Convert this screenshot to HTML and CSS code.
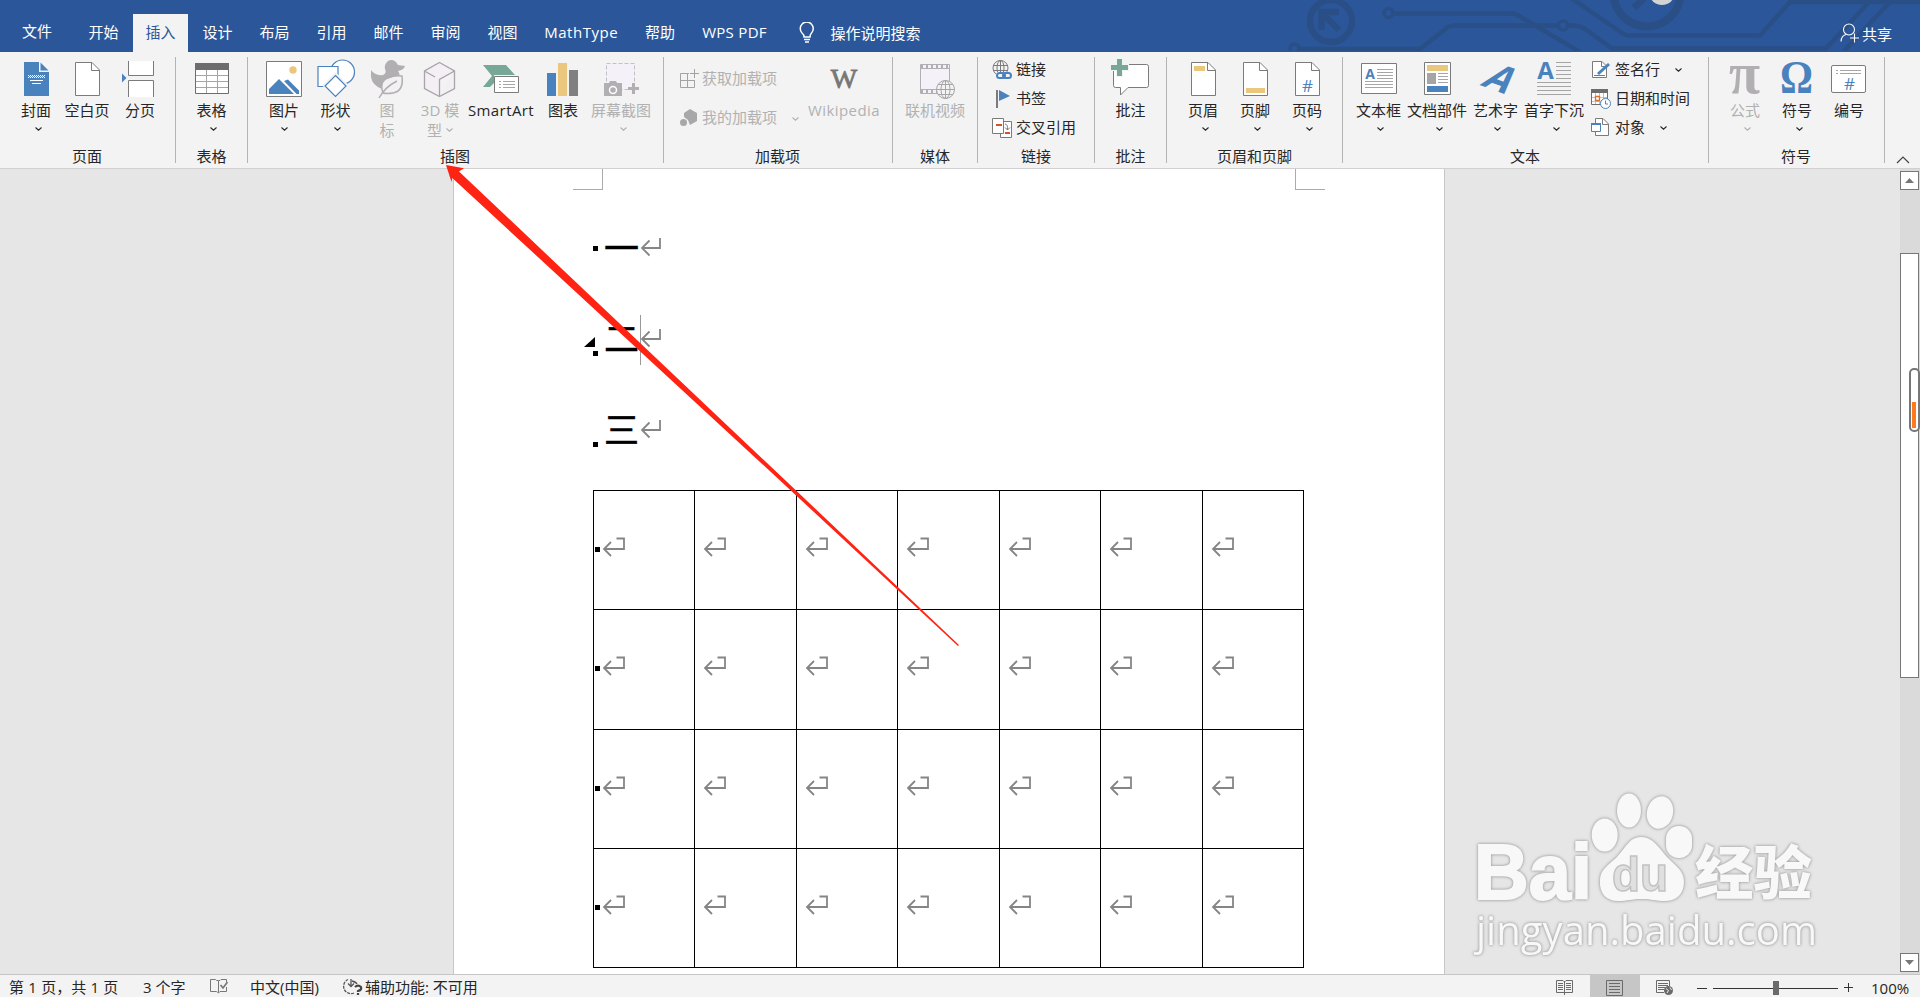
FILE: index.html
```html
<!DOCTYPE html>
<html lang="zh-CN">
<head>
    <meta charset="UTF-8">
    <meta name="viewport" content="width=device-width, initial-scale=1.0">
    <title>Word</title>
    <link rel="stylesheet" href="styles.css">
</head>
<body>
    <svg class="defs" width="0" height="0">
        <symbol id="chev" viewBox="0 0 7 4"><path d="M.5.5 3.5 3.2 6.5.5" fill="none" stroke="currentColor" stroke-width="1.1"/></symbol>
        <symbol id="page" viewBox="0 0 40 40">
            <path d="M8.500 3.500H25L32.500 11V36.500H8.500Z" fill="#fff" stroke="#7b7b7b"/>
            <path d="M24.500 3.500V11.500H32.500" fill="none" stroke="#7b7b7b"/>
        </symbol>
        <symbol id="ret" viewBox="0 0 22 20"><path d="M20 1V11H2M9.500 3.500 2 11 9.500 18.500" fill="none" stroke="#858585" stroke-width="1.800"/></symbol>
        <symbol id="cellret" viewBox="0 0 24 20"><path d="M14.500 1.500H22V12H2M9 5 2 12 9 19" fill="none" stroke="#858585" stroke-width="1.800"/></symbol>
    </svg>

    <header>
        <svg class="circuit" width="660" height="51" viewBox="1260 0 660 51">
            <g fill="none" stroke="#2a4f86" stroke-width="4.500">
                <circle cx="1331" cy="21" r="21" stroke-width="6.500"/>
                <path d="M1339 12H1321.500V30M1321 12 1339 30" stroke-width="6.500"/>
                <circle cx="1388.500" cy="13" r="4.500" stroke-width="3.500"/>
                <path d="M1393 13.500H1511Q1516 13.500 1521 17L1580 52"/>
                <circle cx="1294.500" cy="48.500" r="4.500" stroke-width="3.500"/>
                <path d="M1299 49H1420L1448 27Q1451 25.500 1455 25.500H1558M1567 25.500H1573Q1581 25.500 1588 31L1612 48.500H1826L1869 2"/>
                <circle cx="1563" cy="25.500" r="4.500" stroke-width="3.500"/>
                <path d="M1571-2 1622 33Q1625 35.500 1629 35.500H1760L1790 2H1920M1844 51 1890 2"/>
                <circle cx="1647" cy="-7" r="33.500" stroke-width="8"/>
                <path d="M1634 8 1646-4" stroke-width="7"/>
            </g>
            <circle cx="1662" cy="-8" r="13" fill="#d3d3d3"/>
        </svg>
        <nav>
            <a class="file">文件</a>
            <a>开始</a>
            <a class="active">插入</a>
            <a>设计</a>
            <a>布局</a>
            <a>引用</a>
            <a>邮件</a>
            <a>审阅</a>
            <a>视图</a>
            <a class="mathtype">MathType</a>
            <a>帮助</a>
            <a class="wps">WPS PDF</a>
            <a class="tell">
                <svg width="16" height="22" viewBox="0 0 16 22"><path d="M5 15Q5 12.500 3 11A6.500 6.500 0 1 1 12.500 11Q11 12.500 11 15ZM5 17.500H11M6 20H10" fill="none" stroke="#fff" stroke-width="1.500"/></svg>
                操作说明搜索
            </a>
        </nav>
        <div class="share">
            <svg width="20" height="20" viewBox="0 0 20 20"><g fill="none" stroke="#fff" stroke-width="1.100"><circle cx="9" cy="6.500" r="5.500"/><path d="M1 18.500Q1.500 12.500 6 11.500M14.500 10.500V19.500M10 15H19"/></g></svg>
            共享
        </div>
    </header>

    <section class="ribbon">
        <div class="group g-pages">
            <div class="tools">
                <div class="tool w50">
                    <svg width="40" height="40" viewBox="0 0 40 40"><path d="M8 3H23V13H33V37H8Z" fill="#4a82bd"/><path d="M24.500 3.500V11.500H32.500Z" fill="#4a82bd"/><path d="M12 16.500H29M12 18.500H29" stroke="#fff" stroke-dasharray="1 1"/><path d="M13 17.500H29" stroke="#fff" stroke-dasharray="1 1"/><path d="M14 21.500H27M16 24.500H25" stroke="#fff"/></svg>
                    <span>封面</span><svg class="chev off" width="7" height="4"><use href="#chev"/></svg>
                </div>
                <div class="tool w52"><svg width="40" height="40"><use href="#page"/></svg><span>空白页</span></div>
                <div class="tool w54">
                    <svg width="40" height="40" viewBox="0 0 40 40"><g fill="#fff" stroke="#7b7b7b"><path d="M8.500 2V16.500H33.500V2"/><path d="M8.500 38V21.500H33.500V38"/></g><path d="M2 14.500 6.500 19 2 23.500Z" fill="#4a82bd"/></svg>
                    <span>分页</span>
                </div>
            </div>
            <div class="title">页面</div>
        </div>
        <div class="group g-table">
            <div class="tools">
                <div class="tool w71">
                    <svg width="40" height="40" viewBox="0 0 40 40"><path d="M3.500 4.500H36.500V34.500H3.500Z" fill="#fff" stroke="#6d6d6d"/><path d="M3 4H37V11H3Z" fill="#6d6d6d"/><path d="M4 16.500H36M4 22.500H36M4 28.500H36M14.500 11V34M25.500 11V34" stroke="#a5a5a5"/></svg>
                    <span>表格</span><svg class="chev off" width="7" height="4"><use href="#chev"/></svg>
                </div>
            </div>
            <div class="title">表格</div>
        </div>
        <div class="group g-illus">
            <div class="tools">
                <div class="tool w48">
                    <svg width="40" height="40" viewBox="0 0 40 40"><path d="M2.500 2.500H37.500V37.500H2.500Z" fill="#fff" stroke="#7b7b7b"/><circle cx="29" cy="11" r="3.700" fill="#ebc77d"/><path d="M5 35V30L15 20 30 35ZM20 22 24 20.500 35 31.500V35H32.500Z" fill="#4a82bd"/></svg>
                    <span>图片</span><svg class="chev" width="7" height="4"><use href="#chev"/></svg>
                </div>
                <div class="tool w55">
                    <svg width="40" height="40" viewBox="0 0 40 40"><g fill="#fff" stroke="#4a82bd" stroke-width="1.200"><circle cx="26.500" cy="13" r="12"/><path d="M2 7.500H22V27.500H2Z"/><path d="M19.500 14.500 31.500 26.500 19.500 38.500 7.500 26.500Z" stroke="#f3f3f3" stroke-width="2"/><path d="M19.500 16.500 30 27 19.500 37.500 9 27Z"/></g></svg>
                    <span>形状</span><svg class="chev off" width="7" height="4"><use href="#chev"/></svg>
                </div>
                <div class="tool w48 dim">
                    <svg width="40" height="40" viewBox="0 0 40 40"><path d="M4 11Q8 17 16 16Q20 14 18 10Q17 5 21 2Q27-1 31 6L38 7Q37 11 31 12Q35 17 29 19Q20 20 16 24 14 27 15 30Q5 26 4 18Z" fill="#b1afb1"/><path d="M16 34Q12 22 21 19 28 16 35 17 37 32 26 34 20 35 16 34M12 39Q18 28 30 22" fill="#f4f1f5" stroke="#b1afb1" stroke-width="1.500"/></svg>
                    <span>图<br>标</span>
                </div>
                <div class="tool w58 dim">
                    <svg width="40" height="40" viewBox="0 0 40 40"><path d="M19.500 3.500 34.500 12V29.500L19.500 37.500 4.500 29.500V12Z M34.500 12 19.500 20.500V37.500M4.500 12 15 18" fill="#f3eff5" stroke="#a7a5a7" stroke-width="1.300"/></svg>
                    <span>3D 模<br>型 <svg class="inchev" width="7" height="4"><use href="#chev"/></svg></span>
                </div>
                <div class="tool w64">
                    <svg width="40" height="40" viewBox="0 0 40 40"><path d="M2 6H25L34 16H13V24L9 28H2L11 17Z" fill="#76a797"/><path d="M13.500 17.500H37.500V33.500H13.500Z" fill="#fff" stroke="#7b7b7b"/><path d="M18 22.500H20M22 22.500H34M18 25.500H20M22 25.500H34M18 28.500H20M22 28.500H34" stroke="#a5a5a5"/></svg>
                    <span class="latin">SmartArt</span>
                </div>
                <div class="tool w60">
                    <svg width="40" height="40" viewBox="0 0 40 40"><path d="M4 14H13V37H4Z" fill="#4a82bd"/><path d="M15 4H24V37H15Z" fill="#ebc77d"/><path d="M26 11H35V37H26Z" fill="#808080"/></svg>
                    <span>图表</span>
                </div>
                <div class="tool w56 dim">
                    <svg width="40" height="40" viewBox="0 0 40 40"><path d="M5.500 4.500H33.500V30.500H5.500Z" fill="#f5f1f8" stroke="#c4bfc6" stroke-dasharray="4 2"/><path d="M3 24H8L9 22H15L16 24H21V37H3Z" fill="#b1afb1"/><circle cx="12" cy="31" r="3.500" fill="#b1afb1" stroke="#fff" stroke-width="1.500"/><path d="M27 29.500H38M32.500 24V35" stroke="#b1afb1" stroke-width="3"/></svg>
                    <span>屏幕截图</span><svg class="chev off" width="7" height="4"><use href="#chev"/></svg>
                </div>
            </div>
            <div class="title">插图</div>
        </div>
        <div class="group g-addins">
            <div class="tools">
                <div class="list addins dim">
                    <div class="row"><svg width="20" height="20" viewBox="0 0 20 20"><path d="M10 4.500H1.500V18.500H15.500V11M1.500 11.500H15.500M8.500 4.500V18.500M15.500 0V9M11 4.500H20" fill="none" stroke="#a3a3a3"/></svg><span>获取加载项</span></div>
                    <div class="row"><svg width="20" height="20" viewBox="0 0 20 20"><path d="M11 1 18 5V13L11 17 9 12 5 9V5Z" fill="#a8a8a8"/><circle cx="4.500" cy="14.500" r="3.500" fill="#a8a8a8"/></svg><span>我的加载项</span><svg width="7" height="4"><use href="#chev"/></svg></div>
                </div>
                <div class="tool w72 dim">
                    <svg width="40" height="40" viewBox="0 0 40 40"><text x="20" y="29" class="wiki">W</text></svg>
                    <span class="latin">Wikipedia</span>
                </div>
            </div>
            <div class="title">加载项</div>
        </div>
        <div class="group g-media">
            <div class="tools">
                <div class="tool w84 dim">
                    <svg width="40" height="40" viewBox="0 0 40 40"><path d="M5.500 5.500H34.500V34.500H5.500Z" fill="#f5f1f8" stroke="#b1afb1"/><path d="M6 7.500H34M6 32.500H22" stroke="#b1afb1" stroke-width="3" stroke-dasharray="2 3"/><path d="M6 9.500H34M6 30.500H22" stroke="#b1afb1"/><circle cx="30.500" cy="30.500" r="9" fill="#f3f3f3" stroke="#a7a5a7"/><path d="M21.500 30.500H39.500M30.500 21.500V39.500M23 25.500H38M23 35.500H38" stroke="#a7a5a7"/><ellipse cx="30.500" cy="30.500" rx="4.500" ry="9" fill="none" stroke="#a7a5a7"/></svg>
                    <span>联机视频</span>
                </div>
            </div>
            <div class="title">媒体</div>
        </div>
        <div class="group g-links">
            <div class="tools">
                <div class="list links">
                    <div class="row"><svg width="20" height="20" viewBox="0 0 20 20"><g fill="none" stroke="#7b7b7b"><circle cx="8.500" cy="8" r="7.500"/><ellipse cx="8.500" cy="8" rx="3.500" ry="7.500"/><path d="M8.500.5V15M1 5.500H16M1 10.500H16"/></g><path d="M4 12H19V20H4Z" fill="#f3f3f3"/><g fill="none" stroke="#4a82bd" stroke-width="2"><rect x="5" y="13" width="8" height="5" rx="2.500"/><rect x="11" y="13" width="8" height="5" rx="2.500"/></g></svg><span>链接</span></div>
                    <div class="row"><svg width="20" height="20" viewBox="0 0 20 20"><path d="M4 1H6V19H4Z" fill="#7b7b7b"/><path d="M7 1 18 7 7 12Z" fill="#4a82bd"/></svg><span>书签</span></div>
                    <div class="row"><svg width="20" height="20" viewBox="0 0 20 20"><path d="M8.500 3.500H19.500V19.500H8.500Z" fill="#fff" stroke="#7b7b7b"/><path d="M.5.500H11.500V15.500H.5Z" fill="#fff" stroke="#7b7b7b"/><path d="M4 7H10M13 15H18" stroke="#d9512c" stroke-width="2"/><path d="M13 6Q16 6 15.500 12M13 9.500 15.500 12 18 9.500" fill="none" stroke="#7b7b7b"/></svg><span>交叉引用</span></div>
                </div>
            </div>
            <div class="title">链接</div>
        </div>
        <div class="group g-comment">
            <div class="tools">
                <div class="tool w71">
                    <svg width="40" height="40" viewBox="0 0 40 40"><path d="M2.500 8V26.500Q2.500 28.500 4.500 28.500H9.500V36L17 28.500H35.500Q37.500 28.500 37.500 26.500V7.500Q37.500 5.500 35.500 5.500H17" fill="#fff" stroke="#7b7b7b"/><path d="M8.500-1V18M-1 8.500H18" stroke="#f3f3f3" stroke-width="7"/><path d="M8.500 0V17M0 8.500H17" stroke="#76a797" stroke-width="5"/></svg>
                    <span>批注</span>
                </div>
            </div>
            <div class="title">批注</div>
        </div>
        <div class="group g-header">
            <div class="tools">
                <div class="tool w52"><svg width="40" height="40"><use href="#page"/><path d="M11 7H22V12H11Z" fill="#ebc77d"/></svg><span>页眉</span><svg class="chev off" width="7" height="4"><use href="#chev"/></svg></div>
                <div class="tool w52"><svg width="40" height="40"><use href="#page"/><path d="M11 29H30V34H11Z" fill="#ebc77d"/></svg><span>页脚</span><svg class="chev off" width="7" height="4"><use href="#chev"/></svg></div>
                <div class="tool w52"><svg width="40" height="40"><use href="#page"/><text x="20.500" y="33" class="hash">#</text></svg><span>页码</span><svg class="chev off" width="7" height="4"><use href="#chev"/></svg></div>
            </div>
            <div class="title">页眉和页脚</div>
        </div>
        <div class="group g-text">
            <div class="tools">
                <div class="tool w58a">
                    <svg width="40" height="40" viewBox="0 0 40 40"><path d="M2.500 4.500H37.500V34.500H2.500Z" fill="#fff" stroke="#7b7b7b"/><text x="11" y="20" class="capa small">A</text><path d="M18 10.500H34M18 13.500H34M18 16.500H34M18 19.500H34M6 22.500H34M6 25.500H34M6 28.500H34" stroke="#a5a5a5"/></svg>
                    <span>文本框</span><svg class="chev off" width="7" height="4"><use href="#chev"/></svg>
                </div>
                <div class="tool w58">
                    <svg width="40" height="40" viewBox="0 0 40 40"><path d="M7.500 3.500H33.500V35.500H7.500Z" fill="#fff" stroke="#7b7b7b"/><path d="M10 6H31V12H10Z" fill="#ebc77d"/><path d="M10 14H19V25H10Z" fill="#a5a5a5"/><path d="M10 27H31V33H10Z" fill="#4a82bd"/><path d="M21 14.500H31M21 17.500H31M21 20.500H31M21 23.500H31" stroke="#a5a5a5"/></svg>
                    <span>文档部件</span><svg class="chev off" width="7" height="4"><use href="#chev"/></svg>
                </div>
                <div class="tool w58a">
                    <svg width="40" height="40" viewBox="0 0 40 40"><text transform="translate(3.500 26) rotate(20) skewX(-22)" class="art">A</text></svg>
                    <span>艺术字</span><svg class="chev off" width="7" height="4"><use href="#chev"/></svg>
                </div>
                <div class="tool w58">
                    <svg width="40" height="40" viewBox="0 0 40 40"><text x="11.500" y="20" class="capa">A</text><path d="M22 3.500H37M22 7.500H37M22 11.500H37M22 15.500H37M22 19.500H37M3 23.500H37M3 27.500H37M3 31.500H37M3 35.500H37" stroke="#a5a5a5"/></svg>
                    <span>首字下沉</span><svg class="chev off" width="7" height="4"><use href="#chev"/></svg>
                </div>
                <div class="list texts">
                    <div class="row"><svg width="20" height="20" viewBox="0 0 20 20"><path d="M1.500 1.500H11L15.500 6V17.500H1.500Z" fill="#fff" stroke="#7b7b7b"/><path d="M10.500 1.500V6.500H14" fill="none" stroke="#7b7b7b"/><path d="M3 15.500H14" stroke="#4a82bd"/><path d="M7 14 18 4" stroke="#4a82bd" stroke-width="3"/></svg><span>签名行</span><svg width="7" height="4"><use href="#chev"/></svg></div>
                    <div class="row"><svg width="20" height="20" viewBox="0 0 20 20"><path d="M.5.500H16.500V15.500H.5Z" fill="#fff" stroke="#6d6d6d"/><path d="M0 0H17V4H0Z" fill="#6d6d6d"/><path d="M1 8.500H16M1 12.500H16M4.500 4V15M8.500 4V15M12.500 4V15" stroke="#c0c0c0"/><path d="M4.500 7.500H8.500V11.500H4.500Z" fill="#fff" stroke="#de6f28" stroke-width="1.300"/><circle cx="14.500" cy="14.500" r="5" fill="#fff" stroke="#4a82bd"/><path d="M14.500 11.500V15H17" fill="none" stroke="#4a82bd"/></svg><span>日期和时间</span></div>
                    <div class="row"><svg width="20" height="20" viewBox="0 0 20 20"><path d="M4.500.500H12L17.500 6V17.500H4.500Z" fill="#fff" stroke="#7b7b7b"/><path d="M11.500.500V6.500H17" fill="none" stroke="#7b7b7b"/><path d="M.5 5.500H9.500V13.500H.5Z" fill="#fff" stroke="#4a82bd"/><path d="M0 5H10V7H0Z" fill="#4a82bd"/></svg><span>对象</span><svg width="7" height="4"><use href="#chev"/></svg></div>
                </div>
            </div>
            <div class="title">文本</div>
        </div>
        <div class="group g-symbols">
            <div class="tools">
                <div class="tool w52 dim"><svg width="40" height="40" viewBox="0 0 40 40"><text x="4" y="34" class="pi" textLength="31" lengthAdjust="spacingAndGlyphs">π</text></svg><span>公式</span><svg class="chev off" width="7" height="4"><use href="#chev"/></svg></div>
                <div class="tool w52"><svg width="40" height="40" viewBox="0 0 40 40"><text x="3" y="34" class="omega" textLength="33" lengthAdjust="spacingAndGlyphs">Ω</text></svg><span>符号</span><svg class="chev off" width="7" height="4"><use href="#chev"/></svg></div>
                <div class="tool w52"><svg width="40" height="40" viewBox="0 0 40 40"><rect x="2.500" y="6.500" width="34" height="27" rx="1.500" fill="#fff" stroke="#7b7b7b"/><path d="M7 11.500H9M11 11.500H32M7 14.500H9M11 14.500H32" stroke="#a5a5a5"/><text x="20.500" y="31" class="hash">#</text></svg><span>编号</span></div>
            </div>
            <div class="title">符号</div>
        </div>
        <svg class="collapse" width="14" height="8" viewBox="0 0 14 8"><path d="M1 7 7 1 13 7" fill="none" stroke="#444" stroke-width="1.200"/></svg>
    </section>

    <main>
        <article class="sheet">
            <i class="corner left"></i><i class="corner right"></i>
            <h1><b class="dot"></b><span>一</span><svg width="22" height="20"><use href="#ret"/></svg></h1>
            <h1 class="current"><b class="dot"></b><span>二</span><svg width="22" height="20"><use href="#ret"/></svg></h1>
            <h1 class="third"><b class="dot"></b><span>三</span><svg width="22" height="20"><use href="#ret"/></svg></h1>
            <table id="grid"></table>
        </article>

        <svg class="watermark" width="370" height="180" viewBox="1460 780 370 180">
            <g fill="#f8f8f8">
                <text x="1474" y="899" class="bai" textLength="118" lengthAdjust="spacingAndGlyphs">Bai</text>
                <ellipse cx="1604.700" cy="835" rx="13" ry="16.500"/>
                <ellipse cx="1629" cy="810.500" rx="12" ry="17"/>
                <ellipse cx="1660" cy="812.500" rx="13" ry="16.500" transform="rotate(14 1660 812.500)"/>
                <rect x="1666" y="826" width="26" height="32" rx="12.500"/>
                <path d="M1641 837C1654 837 1660 850 1668 858C1677 867 1684 871 1684 882C1684 896 1674 902 1662 901C1652 900 1650 899 1641 899C1632 899 1628 901 1618 901C1606 901 1599 893 1600 880C1600 870 1608 865 1616 858C1625 849 1629 837 1641 837Z"/>
                <text x="1612" y="891" class="du" textLength="56" lengthAdjust="spacingAndGlyphs">du</text>
                <text x="1695" y="894" class="jy" textLength="117" lengthAdjust="spacingAndGlyphs">经验</text>
                <text x="1476" y="944.500" class="url" textLength="341" lengthAdjust="spacingAndGlyphs">jingyan.baidu.com</text>
            </g>
        </svg>

        <aside class="scrollbar">
            <div class="btn"><svg width="9" height="5"><path d="M0 5 4.500 0 9 5Z" fill="#777"/></svg></div>
            <div class="thumb"></div>
            <div class="btn"><svg width="9" height="5"><path d="M0 0H9L4.500 5Z" fill="#777"/></svg></div>
        </aside>
        <div class="pill"></div>
    </main>

    <footer>
        <span class="pages">第 1 页，共 1 页</span>
        <span class="words">3 个字</span>
        <svg class="proof" width="18" height="16" viewBox="0 0 18 16"><path d="M8.500 3V14.500M8.500 2.500H6.500L5.500 1.500H.5V13.500H6.500L8.500 15 10 13.500H16.500V9M8.500 2.500H10L11 1.500H16.500V4" fill="none" stroke="#777"/><path d="M10.500 7 13 10 17.500 4" fill="none" stroke="#777" stroke-width="1.700"/></svg>
        <span class="lang">中文(中国)</span>
        <svg class="access" width="20" height="18" viewBox="0 0 20 18"><path d="M11 16A7 7 0 0 1 5 2.500" fill="none" stroke="#555" stroke-width="1.300" stroke-dasharray="3 1"/><path d="M8 2V9M5 6.500 8 9.500 11 6.500M9 4Q13 5 14 7" fill="none" stroke="#555" stroke-width="1.300"/><path d="M12 10Q15 7 18 10 19 13 15 14V15M15 16V18" fill="none" stroke="#444" stroke-width="2.200"/></svg>
        <span>辅助功能: 不可用</span>
        <div class="views">
            <div class="view"><svg width="17" height="15" viewBox="0 0 17 15"><path d="M8.500 1V15M.5.500H7L8.500 2 10 .500H16.500V12.500H.5Z" fill="none" stroke="#6a6a6a"/><path d="M2 3.500H7M2 5.500H7M2 7.500H7M2 9.500H7M10 3.500H15M10 5.500H15M10 7.500H15M10 9.500H15" stroke="#6a6a6a"/></svg></div>
            <div class="view on"><svg width="17" height="16" viewBox="0 0 17 16"><path d="M.5.500H16.500V15.500H.5ZM3 3.500H14M3 6.500H14M3 9.500H14M3 12.500H14" fill="none" stroke="#6a6a6a"/></svg></div>
            <div class="view"><svg width="17" height="15" viewBox="0 0 17 15"><path d="M13.500 6V.500H.5V12.500H8M2 3.500H12M2 5.500H12M2 7.500H9M2 9.500H8" fill="none" stroke="#6a6a6a"/><circle cx="12.500" cy="10.500" r="4.500" fill="#6a6a6a"/><path d="M10 8.500 12.500 10.500 11 13M14 7.500 15.500 10" fill="none" stroke="#eee"/></svg></div>
        </div>
        <div class="zoom">
            <i class="minus"></i>
            <div class="track"><i class="knob"></i></div>
            <svg width="10" height="10"><path d="M4.500 0V9M0 4.500H9" stroke="#333"/></svg>
            <span>100%</span>
        </div>
    </footer>

    <svg class="arrow" width="530" height="490" viewBox="440 160 530 490"><path d="M446 165 464 168.300 459 171.500 785 480 959 645 958 646 779.500 480 452.300 178 451.500 182Z" fill="#ff2313"/></svg>

    <script>
        const grid = document.getElementById('grid');
        for (let r = 0; r < 4; r++) {
            const row = grid.insertRow();
            for (let c = 0; c < 7; c++) {
                row.insertCell().innerHTML = '<svg width="24" height="20"><use href="#cellret"/></svg>';
            }
        }
    </script>
</body>
</html>
```

FILE: styles.css
```css
* {
    box-sizing: border-box;
}
body {
    margin: 0;
    width: 1920px;
    height: 997px;
    overflow: hidden;
    display: flex;
    flex-direction: column;
    font-family: "Open Sans", "Noto Sans CJK SC", sans-serif;
    font-size: 15px;
    color: #262626;
    position: relative;
}
svg {
    flex: none;
    display: block;
}
.defs {
    position: absolute;
}
header {
    height: 52px;
    flex: none;
    background: #2b579a;
    color: white;
    display: flex;
    align-items: flex-end;
    justify-content: space-between;
    position: relative;
}
.circuit {
    position: absolute;
    right: 0;
    top: 0;
}
nav {
    display: flex;
    align-items: flex-end;
    padding-left: 22px;
}
nav a {
    width: 57px;
    height: 38px;
    line-height: 37px;
    text-align: center;
    white-space: nowrap;
}
nav .file {
    width: 30px;
    line-height: 35px;
    margin-right: 23px;
}
nav .active {
    background: #f3f3f3;
    color: #2b579a;
    width: 55px;
    margin: 0 1px;
}
nav .mathtype {
    width: 100.5px;
    letter-spacing: 0.55px;
}
nav .wps {
    width: 92px;
    letter-spacing: 0.3px;
}
nav .tell {
    width: 130px;
    margin-left: 18px;
    display: flex;
    align-items: center;
    gap: 16px;
}
.share {
    display: flex;
    align-items: center;
    gap: 2px;
    height: 38px;
    padding-right: 28px;
    position: relative;
}

/* ribbon */
.ribbon {
    height: 117px;
    flex: none;
    display: flex;
    background: #f3f3f3;
    border-bottom: 1px solid #d0d0d0;
    padding-top: 5px;
}
.group {
    height: 106px;
    flex: none;
    border-right: 1px solid #b4b4b4;
    display: flex;
    flex-direction: column;
}
.tools {
    height: 89px;
    flex: none;
    display: flex;
}
.title {
    line-height: 20px;
    text-align: center;
}
.tool {
    flex: none;
    display: flex;
    flex-direction: column;
    align-items: center;
    padding-top: 2px;
    line-height: 20px;
    white-space: nowrap;
    text-align: center;
}
.tool > svg:first-child {
    overflow: visible;
}
.tool > span {
    margin-top: 1px;
}
.latin {
    letter-spacing: 0.4px;
}
.chev {
    margin-top: 7px;
}
.chev.off {
    position: relative;
    left: 2px;
}
.inchev {
    display: inline-block;
    vertical-align: 4px;
}
.dim {
    color: #b1b1b1;
}
.w48 { width: 48px; }
.w50 { width: 50px; }
.w52 { width: 52px; }
.w54 { width: 54px; }
.w55 { width: 55px; }
.w56 { width: 56px; }
.w58 { width: 58px; }
.w58a { width: 59px; }
.w60 { width: 60px; }
.w64 { width: 64px; }
.w71 { width: 71px; }
.w72 { width: 72px; }
.w84 { width: 84px; }
.g-pages { width: 176px; padding-left: 11px; }
.g-pages .title { padding-right: 12px; }
.g-table { width: 72px; }
.g-illus { width: 416px; padding-left: 12px; }
.g-illus .title { padding-right: 13px; }
.g-addins { width: 229px; padding-left: 15px; }
.g-addins .title { padding-right: 16px; }
.g-media { width: 85px; }
.g-links { width: 117px; padding-left: 14px; }
.g-links .title { padding-right: 14px; }
.g-comment { width: 72px; }
.g-header { width: 176px; padding-left: 10px; }
.g-header .title { padding-right: 10px; }
.g-text { width: 366px; padding-left: 6px; }
.g-text .title { padding-right: 7px; }
.g-symbols { width: 176px; padding-left: 10px; }
.g-symbols .title { padding-right: 11px; }

.list {
    display: flex;
    flex-direction: column;
    white-space: nowrap;
    margin-top: -2px;
}
.row {
    height: 29px;
    display: flex;
    align-items: center;
    gap: 4px;
    line-height: 20px;
}
.row svg:last-child {
    margin-left: 11px;
}
.row span {
    margin-top: -2px;
}
.addins {
    width: 129px;
    padding-top: 11px;
}
.addins .row {
    height: 39px;
    align-items: flex-start;
    line-height: 28px;
    gap: 3px;
}
.addins .row svg:first-child {
    margin-top: 3px;
}
.addins .row svg:last-child {
    margin: 12px 0 0 12px;
}
.texts {
    padding-left: 8px;
}
.wiki {
    font: 28px "Liberation Serif", serif;
    text-anchor: middle;
    fill: #777;
    stroke: #777;
    stroke-width: 0.8px;
}
.capa {
    font: bold 24px "Open Sans", sans-serif;
    text-anchor: middle;
    fill: #4a82bd;
}
.capa.small {
    font-size: 14px;
}
.art {
    font: bold 38px "Open Sans", sans-serif;
    fill: #4a82bd;
}
.hash {
    font: 500 17px "Open Sans", sans-serif;
    text-anchor: middle;
    fill: #4a82bd;
}
.pi {
    font: bold 60px "Liberation Serif", serif;
    fill: #b1afb1;
}
.omega {
    font: bold 46px "Liberation Serif", serif;
    fill: #4a82bd;
}
.collapse {
    margin: 99px 0 0 11px;
}

/* document */
main {
    flex: 1;
    background: #e6e6e6;
    position: relative;
    display: flex;
    justify-content: space-between;
    padding-left: 453px;
}
.sheet {
    width: 992px;
    height: 805px;
    background: white;
    border: solid #c6c6c6;
    border-width: 0 1px;
    padding: 33px 0 0 139px;
    position: relative;
}
.corner {
    position: absolute;
    top: 0;
    width: 30px;
    height: 21px;
    border-bottom: 1px solid #ababab;
}
.corner.left {
    left: 119px;
    border-right: 1px solid #ababab;
}
.corner.right {
    left: 841px;
    border-left: 1px solid #ababab;
}
h1 {
    height: 91px;
    margin: 0;
    display: flex;
    align-items: center;
    font: 35px/91px "Noto Sans CJK SC", sans-serif;
    color: black;
    -webkit-text-stroke: 0.5px black;
    position: relative;
}
h1 span {
    margin-top: -5px;
}
h1 svg {
    margin: -2px 0 0 1px;
}
.dot {
    width: 5px;
    height: 5px;
    margin: 1px 6px 0 0;
    background: black;
}
.current .dot {
    margin-top: 29px;
}
.third .dot {
    margin-top: 30px;
}
/* collapse triangle and text caret of the current heading */
.current::before {
    content: "";
    position: absolute;
    left: -9px;
    top: 44px;
    border-left: 11px solid transparent;
    border-bottom: 10px solid black;
}
.current::after {
    content: "";
    position: absolute;
    left: 47px;
    top: 22px;
    width: 1px;
    height: 50px;
    background: #999;
}
table {
    width: 711px;
    margin-top: 15px;
    table-layout: fixed;
    border-collapse: collapse;
}
tr {
    height: 119.3px;
}
td {
    border: 1px solid black;
    padding: 46px 0 0 8px;
    vertical-align: top;
    position: relative;
}
td:first-child::before {
    content: "";
    position: absolute;
    left: 1px;
    top: 56px;
    width: 5px;
    height: 5px;
    background: black;
}
.watermark {
    position: absolute;
    left: 1460px;
    top: 611px;
    filter: drop-shadow(0 0 1.5px #999) drop-shadow(0 0 1px #ccc);
}
.bai {
    font: bold 78px "Liberation Sans", sans-serif;
    stroke: #f8f8f8;
    stroke-width: 2px;
}
.du {
    font: bold 48px "Liberation Sans", sans-serif;
    fill: #e0e0e0;
    stroke: #c2c2c2;
    stroke-width: 1.5px;
}
.jy {
    font: 900 58px "Noto Sans CJK SC", sans-serif;
}
.url {
    font: 500 41px "Open Sans", sans-serif;
}
.scrollbar {
    width: 20px;
    height: 805px;
    padding-top: 2px;
    padding-right: 1px;
    background: #dadada;
    display: flex;
    flex-direction: column;
}
.btn {
    height: 19px;
    flex: none;
    border: 1px solid #777;
    background: white;
    display: flex;
    align-items: center;
    justify-content: center;
}
.thumb {
    height: 425px;
    margin: 63px 0 275px;
    flex: none;
    border: 1px solid #777;
    background: white;
}
.pill {
    position: absolute;
    left: 1909px;
    top: 199px;
    width: 11px;
    height: 64px;
    border: 2px solid #777;
    border-radius: 5px;
    background: linear-gradient(#ff7a1f, #ff7a1f) 1px 32px / 4px 26px no-repeat, white;
}

footer {
    height: 23px;
    flex: none;
    background: #f3f3f3;
    border-top: 1px solid #c6c6c6;
    display: flex;
    align-items: center;
    padding-left: 9px;
    white-space: nowrap;
    line-height: 22px;
}
footer > span {
    padding-top: 1px;
}
.pages {
    width: 134px;
    word-spacing: 0.4px;
}
.words {
    width: 67px;
}
.proof {
    margin-right: 22px;
}
.lang {
    width: 93px;
}
.access {
    margin-right: 2px;
}
.views {
    display: flex;
    margin-left: auto;
}
.view {
    width: 50px;
    height: 22px;
    display: flex;
    align-items: center;
    justify-content: center;
    padding: 3px 1px 0 0;
}
.view.on {
    background: #c6c6c6;
}
.zoom {
    display: flex;
    align-items: center;
    width: 230px;
    padding: 4px 10px 0 7px;
}
.minus {
    width: 10px;
    height: 1px;
    background: #333;
}
.track {
    width: 125px;
    height: 1px;
    margin: 0 6px;
    background: #333;
    position: relative;
}
.knob {
    position: absolute;
    left: 60px;
    top: -7px;
    width: 6px;
    height: 14px;
    background: #6a6a6a;
}
.zoom span {
    margin-left: 17px;
}
.arrow {
    position: absolute;
    left: 440px;
    top: 160px;
}
```
